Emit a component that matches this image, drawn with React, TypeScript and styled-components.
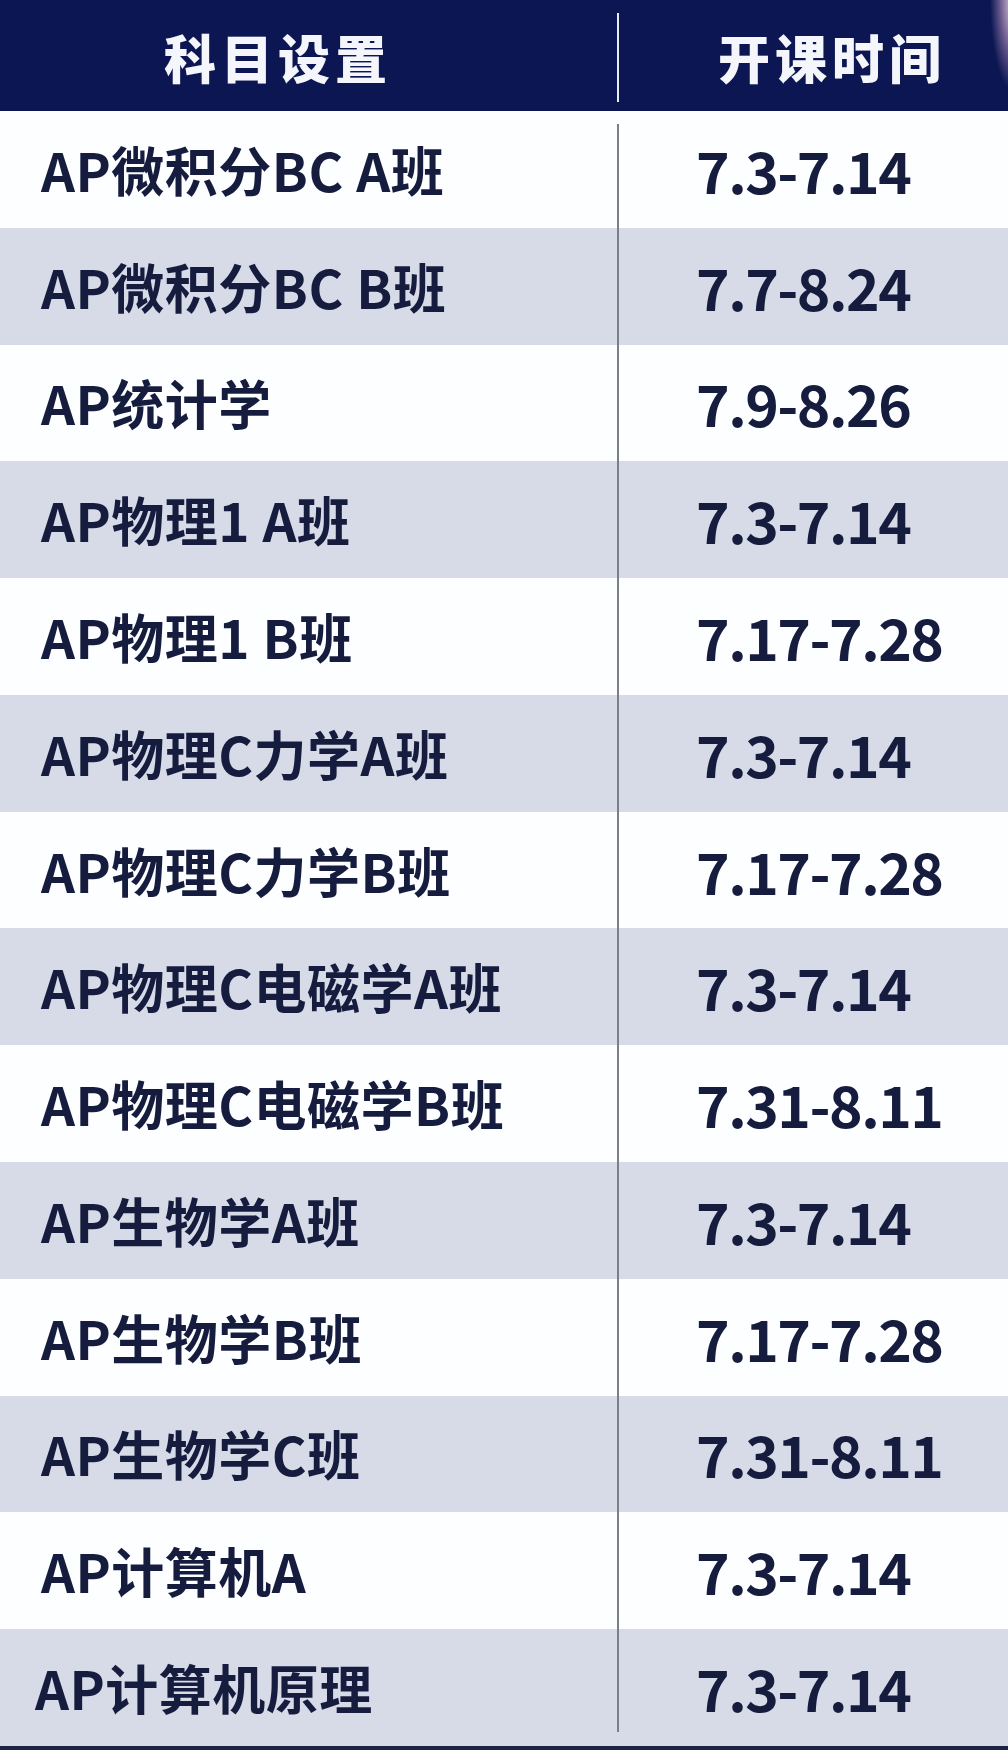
import React from 'react'
import styled, { createGlobalStyle } from 'styled-components'

interface ICourse {
  name: string
  dates: string
}

const courses: ICourse[] = [
  { name: 'AP微积分BC A班', dates: '7.3-7.14' },
  { name: 'AP微积分BC B班', dates: '7.7-8.24' },
  { name: 'AP统计学', dates: '7.9-8.26' },
  { name: 'AP物理1 A班', dates: '7.3-7.14' },
  { name: 'AP物理1 B班', dates: '7.17-7.28' },
  { name: 'AP物理C力学A班', dates: '7.3-7.14' },
  { name: 'AP物理C力学B班', dates: '7.17-7.28' },
  { name: 'AP物理C电磁学A班', dates: '7.3-7.14' },
  { name: 'AP物理C电磁学B班', dates: '7.31-8.11' },
  { name: 'AP生物学A班', dates: '7.3-7.14' },
  { name: 'AP生物学B班', dates: '7.17-7.28' },
  { name: 'AP生物学C班', dates: '7.31-8.11' },
  { name: 'AP计算机A', dates: '7.3-7.14' },
  { name: 'AP计算机原理', dates: '7.3-7.14' },
]

const GlobalStyle = createGlobalStyle`
  html, body {
    margin: 0;
    padding: 0;
    background: #ffffff;
  }

  body {
    font-family: "Noto Sans CJK SC", "Liberation Sans", sans-serif;
  }
`

const App = (): JSX.Element => {
  return (
    <>
      <GlobalStyle />
      <StyledTable>
        <HeaderRow>
          <HeaderCell $indent={164}>科目设置</HeaderCell>
          <HeaderDivider />
          <HeaderCell $indent={99}>开课时间</HeaderCell>
        </HeaderRow>
        <Body>
          {courses.map((c, i) => (
            <Row key={c.name} $shaded={i % 2 === 1}>
              <NameCell $last={i === courses.length - 1}>{c.name}</NameCell>
              <DateCell>{c.dates}</DateCell>
            </Row>
          ))}
        </Body>
        <BottomEdge />
      </StyledTable>
    </>
  )
}

export default App

const StyledTable = styled.div`
  width: 1008px;
  height: 1750px;
  display: flex;
  flex-direction: column;
  overflow: hidden;
`

const HeaderRow = styled.header`
  height: 111px;
  flex: none;
  display: grid;
  grid-template-columns: 617px 2px 1fr;
  align-items: center;

  background:
    radial-gradient(ellipse 24px 92px at 1014px 0px, rgba(248, 222, 230, 0.95), rgba(190, 150, 195, 0.5) 60%, rgba(11, 22, 82, 0) 100%),
    #0b1652;
`

const HeaderCell = styled.div<{ $indent: number }>`
  display: flex;
  padding-left: ${({ $indent }) => $indent}px;
  padding-top: 2px;

  font-size: 52px;
  font-weight: 900;
  letter-spacing: 5px;
  color: #f4f6fb;
  line-height: 1;
`

const HeaderDivider = styled.div`
  align-self: start;
  margin-top: 13px;
  height: 89px;
  background: #e8ecf4;
`

const Body = styled.div`
  position: relative;
  flex: 1;
  display: flex;
  flex-direction: column;

  &::after {
    content: '';
    position: absolute;
    left: 617px;
    top: 13px;
    bottom: 14px;
    width: 2px;
    background: #7c7f88;
  }
`

const Row = styled.div<{ $shaded: boolean }>`
  flex: 1;
  display: grid;
  grid-template-columns: 617px 1fr;
  align-items: center;
  background: ${({ $shaded }) => ($shaded ? '#d6dbe7' : '#fdfeff')};
  color: #161c3e;
  font-weight: 700;
  line-height: 1;
`

const NameCell = styled.div<{ $last?: boolean }>`
  padding-left: ${({ $last }) => ($last ? '35px' : '41px')};
  font-size: 53px;
  letter-spacing: 0.5px;
  white-space: nowrap;
`

const DateCell = styled.div`
  padding-left: 79px;
  font-size: 57px;
  letter-spacing: -1.5px;
  white-space: nowrap;
`

const BottomEdge = styled.div`
  height: 4px;
  flex: none;
  background: #1b2440;
`
